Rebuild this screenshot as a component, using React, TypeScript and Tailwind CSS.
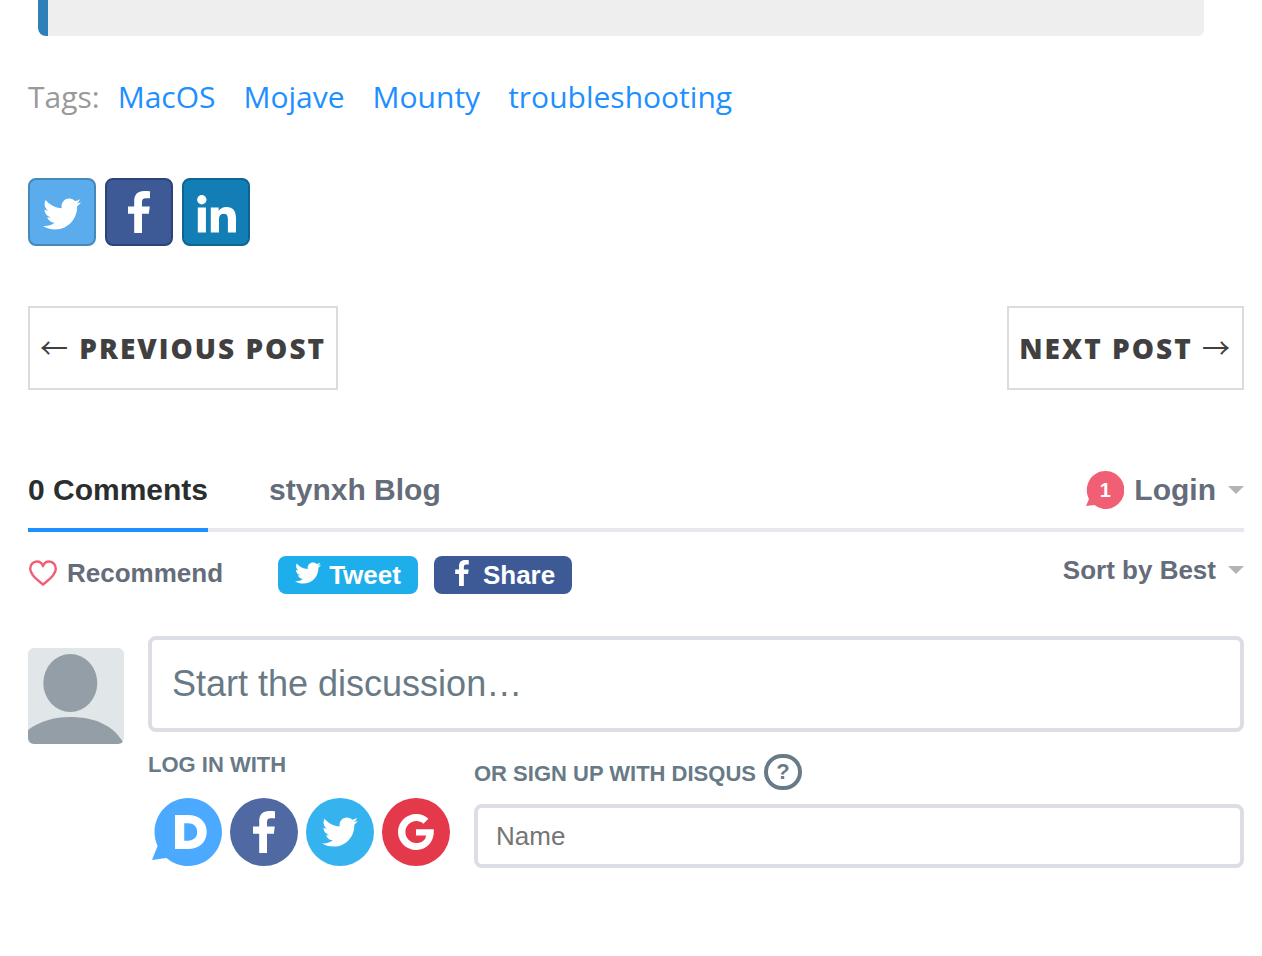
import type { ReactNode } from "react";
import { FaTwitter } from "react-icons/fa";
import { SiDisqus } from "react-icons/si";

const tags = ["MacOS", "Mojave", "Mounty", "troubleshooting"];

function Caret() {
  return (
    <svg width="16" height="8" viewBox="0 0 16 8" aria-hidden="true">
      <path d="M0 0h16L8 8z" fill="#b3b3b3" />
    </svg>
  );
}

function Heart() {
  return (
    <svg width="30" height="26" viewBox="0 0 30 26" fill="none" stroke="#f05f74" strokeWidth="2.4" aria-hidden="true">
      <path
        d="M15 24.6C12 21.8 2.2 16 2.2 8.8C2.2 4.8 5 1.5 8.8 1.5C12 1.5 14.3 3.6 15 6.2C15.7 3.6 18 1.5 21.2 1.5C25 1.5 27.8 4.8 27.8 8.8C27.8 16 18 21.8 15 24.6Z"
        strokeLinejoin="round"
      />
    </svg>
  );
}

function FacebookMark({ className }: { className: string }) {
  return (
    <svg viewBox="0 0 22 42" fill="currentColor" className={className} aria-hidden="true">
      <path d="M6.2 42V22.8H0V15.5H6.2V10.2C6.2 3.4 9.8 0 16 0C18.8 0 21 .2 22 .3V7.2H17.8C14.8 7.2 14 8.6 14 11.2V15.5H21.8L20.8 22.8H14V42Z" />
    </svg>
  );
}

function LinkedInMark() {
  return (
    <svg width="40" height="38" viewBox="0 0 40 38" fill="currentColor" aria-hidden="true">
      <circle cx="5.8" cy="4.7" r="4.7" />
      <path d="M1.8 12.5H9.9V37.5H1.8ZM14.8 12.5H22.6V16C23.8 13.7 26.6 11.9 30.4 11.9C38.2 11.9 40 17 40 23.7V37.5H31.9V25.3C31.9 22.4 31.8 18.7 27.8 18.7C23.7 18.7 23 21.9 23 25.1V37.5H14.8Z" />
    </svg>
  );
}

function GoogleMark() {
  return (
    <svg width="36" height="36" viewBox="0 0 36 36" fill="currentColor" aria-hidden="true">
      <path d="M18 15.2H35.7C36.8 26.5 29.8 36 18.3 36C8.2 36 0 28 0 18S8.2 0 18.3 0C23.2 0 27.3 1.8 30.4 4.7L25.4 9.7C23.6 8 21.2 7 18.3 7C12.2 7 7.4 12 7.4 18S12.2 29 18.3 29C23.8 29 27.3 26 28.2 21.4H18Z" />
    </svg>
  );
}

function Avatar() {
  return (
    <svg
      width="96"
      height="96"
      viewBox="0 0 96 96"
      className="mt-3 shrink-0 rounded-md"
      role="img"
      aria-label="Guest avatar"
    >
      <rect width="96" height="96" fill="#e1e7e9" />
      <ellipse cx="42.3" cy="35" rx="27" ry="29" fill="#949ea6" />
      <path d="M0 96V82C12 73 26 69 42 69C66 69 86 77 96 96Z" fill="#949ea6" />
    </svg>
  );
}

function LoginCircle({ label, color, children }: { label: string; color: string; children: ReactNode }) {
  return (
    <button type="button" aria-label={label} className={`flex size-[68px] items-center justify-center rounded-full text-white ${color}`}>
      {children}
    </button>
  );
}

export default function App() {
  return (
    <main className="min-h-screen bg-white pb-20 pl-7 pr-[18px] font-['Liberation_Sans',sans-serif] text-[#656c7a]">
      <div className="ml-2.5 mr-10 h-9 rounded-b-md rounded-bl-lg border-l-[10px] border-[#2f80b9] bg-[#eee]" />

      <div className="mt-10 flex items-center gap-7 font-['Open_Sans',sans-serif] text-[30px] leading-[42px]">
        <span className="-mr-2.5 text-[#999]">Tags:</span>
        {tags.map((tag) => (
          <a key={tag} href="#" className="text-[#1e8fff]">
            {tag}
          </a>
        ))}
      </div>

      <div className="mt-[60px] flex gap-[9px] text-white">
        <a href="#" aria-label="Share on Twitter" className="flex size-[68px] items-center justify-center rounded-lg border-2 border-[#4589bb] bg-[#5aacec] pt-1">
          <FaTwitter size={38} />
        </a>
        <a href="#" aria-label="Share on Facebook" className="flex size-[68px] items-center justify-center rounded-lg border-2 border-[#2c4479] bg-[#3d5a96]">
          <FacebookMark className="h-[42px] w-[22px]" />
        </a>
        <a href="#" aria-label="Share on LinkedIn" className="flex size-[68px] items-center justify-center rounded-lg border-2 border-[#0d6493] bg-[#137db6] pt-1">
          <LinkedInMark />
        </a>
      </div>

      <nav className="mt-[60px] flex justify-between font-['Open_Sans',sans-serif] text-[28px] leading-[40px] font-extrabold tracking-[2px] text-[#404040] uppercase">
        <a href="#" className="h-[84px] border-2 border-[#dcdcdc] px-2.5 py-[19px]">
          <span className="font-['Noto_Sans_CJK_JP',sans-serif] font-normal">←</span> Previous Post
        </a>
        <a href="#" className="h-[84px] border-2 border-[#dcdcdc] px-2.5 py-[19px]">
          Next Post <span className="font-['Noto_Sans_CJK_JP',sans-serif] font-normal">→</span>
        </a>
      </nav>

      <header className="mt-[76px] flex justify-between border-b-4 border-[#e7e8ee] text-[30px] leading-[48px] font-bold">
        <div className="-mb-1 flex gap-[61px]">
          <a href="#" className="border-b-4 border-[#1e8fff] pb-[14px] text-[#2a2e2e]">
            0 Comments
          </a>
          <a href="#">stynxh Blog</a>
        </div>
        <button type="button" className="flex h-12 items-center gap-2.5">
          <span className="relative flex h-[38px] w-[38px] items-center justify-center text-[20px] leading-none text-white">
            <svg className="absolute inset-0" width="38" height="38" viewBox="0 0 38 38" aria-hidden="true">
              <path d="M19.5 0A18.5 19 0 1 1 8.5 34L0 35L3 28A18.5 19 0 0 1 19.5 0Z" fill="#f05f74" />
            </svg>
            <span className="relative">1</span>
          </span>
          <span className="mr-0.5">Login</span>
          <Caret />
        </button>
      </header>

      <div className="mt-6 flex items-start justify-between text-[26px] leading-[38px] font-bold">
        <div className="flex">
          <button type="button" className="mr-[55px] flex h-[34px] items-center gap-[9px]">
            <Heart />
            Recommend
          </button>
          <button type="button" className="mr-4 flex h-[38px] w-[140px] items-center justify-center gap-2 rounded-lg bg-[#1eaeec] text-white">
            <FaTwitter size={26} className="-mt-1" />
            Tweet
          </button>
          <button type="button" className="flex h-[38px] w-[138px] items-center justify-center gap-[14px] rounded-lg bg-[#3d5a96] pl-1 text-white">
            <FacebookMark className="-mt-1 h-[26px] w-[14px]" />
            Share
          </button>
        </div>
        <button type="button" className="flex h-7 items-center gap-3">
          Sort by Best
          <Caret />
        </button>
      </div>

      <section className="mt-[42px] flex gap-6 text-[#687a86]">
        <Avatar />
        <div className="min-w-0 flex-1">
          <textarea
            aria-label="Start the discussion"
            placeholder="Start the discussion…"
            rows={1}
            className="block h-24 w-full resize-none overflow-hidden rounded-lg border-4 border-[#dbdee4] bg-white px-5 py-[22px] text-[36px] leading-[44px] placeholder:text-[#687a86]"
          />
          <div className="mt-[22px] flex gap-6">
            <div className="shrink-0">
              <h2 className="text-[22px] leading-[22px] font-bold">LOG IN WITH</h2>
              <div className="mt-[22px] flex gap-2 pl-1">
                <button type="button" aria-label="Disqus" className="flex h-[68px] w-[70px] items-center justify-center text-[#4baaff]">
                  <SiDisqus size={70} />
                </button>
                <LoginCircle label="Facebook" color="bg-[#5069a2]">
                  <FacebookMark className="h-[42px] w-[22px]" />
                </LoginCircle>
                <LoginCircle label="Twitter" color="bg-[#35b3ee]">
                  <FaTwitter size={36} />
                </LoginCircle>
                <LoginCircle label="Google" color="bg-[#e4384b]">
                  <GoogleMark />
                </LoginCircle>
              </div>
            </div>
            <div className="min-w-0 flex-1">
              <div className="flex h-9 items-center gap-2">
                <label htmlFor="name" className="pt-1 text-[22px] leading-[22px] font-bold">
                  OR SIGN UP WITH DISQUS
                </label>
                <button type="button" aria-label="Help" className="flex h-9 w-[38px] items-center justify-center rounded-full border-4 border-[#687a86] text-[22px] leading-none font-bold">
                  ?
                </button>
              </div>
              <input
                id="name"
                type="text"
                placeholder="Name"
                className="mt-[14px] block h-16 w-full rounded-lg border-4 border-[#dbdee4] bg-white px-[18px] text-[26px] placeholder:text-[#757575]"
              />
            </div>
          </div>
        </div>
      </section>
    </main>
  );
}
